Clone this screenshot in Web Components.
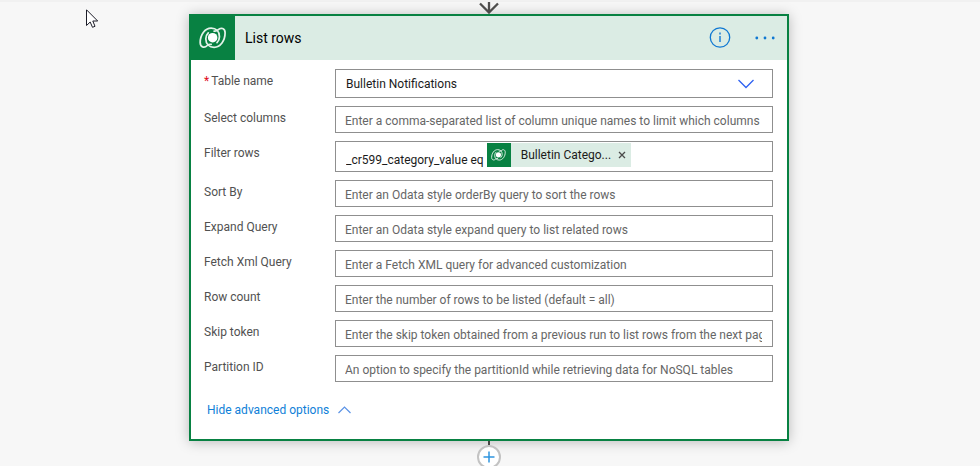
<!DOCTYPE html>
<html lang="en">
<head>
<meta charset="utf-8">
<title>List rows</title>
<style>
html { scrollbar-width: none; }
body { margin: 0; background: #f7f7f7; font-family: "Segoe UI", Roboto, "Noto Sans", sans-serif; font-size: 12px; color: #000; }
</style>
</head>
<body>
<flow-canvas>
  <flow-arrow></flow-arrow>
  <action-card heading="List rows">
    <choice-field label="Table name" value="Bulletin Notifications" required></choice-field>
    <text-field label="Select columns" hint="Enter a comma-separated list of column unique names to limit which columns are listed"></text-field>
    <expression-field label="Filter rows" value="_cr599_category_value eq"><token-chip>Bulletin Catego...</token-chip></expression-field>
    <text-field label="Sort By" hint="Enter an Odata style orderBy query to sort the rows"></text-field>
    <text-field label="Expand Query" hint="Enter an Odata style expand query to list related rows"></text-field>
    <text-field label="Fetch Xml Query" hint="Enter a Fetch XML query for advanced customization"></text-field>
    <text-field label="Row count" hint="Enter the number of rows to be listed (default = all)"></text-field>
    <text-field label="Skip token" hint="Enter the skip token obtained from a previous run to list rows from the next page"></text-field>
    <text-field label="Partition ID" hint="An option to specify the partitionId while retrieving data for NoSQL tables"></text-field>
    <advanced-toggle slot="footer">Hide advanced options</advanced-toggle>
  </action-card>
  <add-step></add-step>
  <mouse-pointer slot="overlay"></mouse-pointer>
</flow-canvas>
<script>
const define = (name, render) => customElements.define(name, class extends HTMLElement {
  constructor() {
    super();
    this.attachShadow({ mode: 'open' });
  }
  connectedCallback() {
    const t = document.createElement('template');
    t.innerHTML = render(this);
    this.shadowRoot.replaceChildren(t.content.cloneNode(true));
  }
});

const fieldStyles = `
  * { box-sizing: border-box; }
  :host { display: grid; grid-template-columns: 131px minmax(0, 1fr); align-items: start; }
  label { line-height: 24px; color: #515151; white-space: nowrap; }
  .req { color: #e00b1c; margin-right: 2px; }
  input, select { font: inherit; color: #1b1b1b; margin: 0; border-radius: 0; background: #fff; outline-color: #0078d4; }
`;

define('flow-canvas', () => `
  <style>
    :host { display: flex; flex-direction: column; align-items: center; position: relative; border-top: 2px solid #f1f1f1; padding: 0 10px 0 8px; }
  </style>
  <slot></slot><slot name="overlay"></slot>`);

define('flow-arrow', () => `
  <style>:host { display: block; height: 12px; } svg { display: block; }</style>
  <svg width="22" height="12" viewBox="0 0 22 12" fill="none" stroke="#51504f" stroke-width="2.3" aria-hidden="true"><path d="M11 0V11M2 1.5L11 10.5L20 1.5"/></svg>`);

define('dataverse-logo', () => `
  <style>:host { display: grid; place-items: center; background: #088142; } svg { width: 62%; }</style>
  <svg viewBox="0 0 28 22" fill="none" stroke="#e3f2e9" stroke-width="1.800" stroke-linejoin="round" stroke-linecap="round" aria-hidden="true">
    <path d="M12.500 17.800C10.500 17.500 9.500 18 8.500 19C5.500 22 1.200 20.800 1.200 16C1.200 8 6 1.200 12.500 1.200C17.500 1.200 21 4.500 21 10C21 12.500 20 14.500 18.500 16"/>
    <path d="M15.500 4.200C17.500 4.500 18.500 4 19.500 3C22.500 0 26.800 1.200 26.800 6C26.800 14 22 20.800 15.500 20.800C10.500 20.800 7 17.500 7 12C7 9.500 8 7.500 9.500 6"/>
    <circle cx="14" cy="11" r="4.900" fill="#fff" stroke="none"/>
  </svg>`);

define('action-card', el => `
  <style>
    * { box-sizing: border-box; }
    :host { display: block; box-sizing: border-box; width: 100%; max-width: 600px; border: 2px solid #088142; background: #fff; box-shadow: 0 1px 12px rgba(0,0,0,.25); }
    header { display: flex; align-items: center; height: 44px; background: #dbece4; padding-right: 8px; }
    dataverse-logo { width: 44px; height: 44px; }
    h1 { flex: 1; margin: 0; padding-left: 10px; font-size: 14px; font-weight: 400; }
    button { border: 0; padding: 0; background: none; display: grid; place-items: center; width: 28px; height: 28px; }
    .actions { display: flex; gap: 17px; }
    svg { display: block; }
    form { display: grid; gap: 8px; padding: 9px 14px 0 13px; }
    footer { padding: 17px 16px 18px; }
  </style>
  <header>
    <dataverse-logo></dataverse-logo>
    <h1>${el.getAttribute('heading')}</h1>
    <div class="actions">
      <button aria-label="Information"><svg width="22" height="22" viewBox="0 0 22 22" fill="none" stroke="#0f78d2"><circle cx="11" cy="10.500" r="9.700" stroke-width="1.300"/><path d="M11 9V15M11 5.500V7.500" stroke-width="1.800" stroke="#3c91d8"/></svg></button>
      <button aria-label="More commands"><svg width="22" height="22" viewBox="0 0 22 22" fill="#0f78d2"><circle cx="2.800" cy="11" r="1.400"/><circle cx="11" cy="11" r="1.400"/><circle cx="19.200" cy="11" r="1.400"/></svg></button>
    </div>
  </header>
  <form><slot></slot></form>
  <footer><slot name="footer"></slot></footer>`);

define('text-field', el => `
  <style>${fieldStyles}
    input { width: 100%; height: 27px; border: 1px solid #8f8f8f; padding: 3px 10px 0 9px; }
    input::placeholder { color: #666; opacity: 1; }
  </style>
  <label for="f">${el.getAttribute('label')}</label>
  <input id="f" type="text" placeholder="${el.getAttribute('hint')}">`);

define('choice-field', el => `
  <style>${fieldStyles}
    .box { display: grid; align-items: center; }
    select, svg { grid-area: 1 / 1; }
    select { appearance: none; width: 100%; height: 29px; border: 1px solid #8f8f8f; padding: 0 40px 0 10px; }
    svg { justify-self: end; margin-right: 19px; pointer-events: none; }
  </style>
  <label for="f">${el.hasAttribute('required') ? '<span class="req">*</span>' : ''}${el.getAttribute('label')}</label>
  <div class="box">
    <select id="f"><option>${el.getAttribute('value')}</option></select>
    <svg width="16" height="10" viewBox="0 0 16 10" fill="none" stroke="#2f62f2" stroke-width="1.300" aria-hidden="true"><path d="M.5 1L8 8.500L15.500 1"/></svg>
  </div>`);

define('expression-field', el => `
  <style>${fieldStyles}
    .box { display: flex; align-items: flex-start; gap: 3px; height: 31px; border: 1px solid #8f8f8f; padding: 1px 10px 0; overflow: hidden; }
    input { field-sizing: content; border: 0; padding: 0; height: 24px; margin-top: 5px; }
  </style>
  <label for="f">${el.getAttribute('label')}</label>
  <div class="box"><input id="f" type="text" value="${el.getAttribute('value')}"><slot></slot></div>`);

define('token-chip', () => `
  <style>
    :host { display: flex; align-items: center; height: 24px; background: #dbece4; color: #1b1b1b; white-space: nowrap; }
    dataverse-logo { width: 24px; height: 24px; margin-right: 10px; }
    button { border: 0; background: none; padding: 0 5px; margin-left: 2px; height: 24px; }
    svg { display: block; }
  </style>
  <dataverse-logo></dataverse-logo><slot></slot>
  <button type="button" aria-label="Remove"><svg width="8" height="8" viewBox="0 0 8 8" stroke="#4a4a4a" stroke-width="1.300"><path d="M1 1L7 7M7 1L1 7"/></svg></button>`);

define('advanced-toggle', () => `
  <style>
    :host { display: flex; }
    a { display: flex; align-items: center; gap: 9px; line-height: 22px; color: #0f7fd8; text-decoration: none; }
  </style>
  <a href="#"><slot></slot><svg width="13" height="8" viewBox="0 0 13 8" fill="none" stroke="#5b93e6" stroke-width="1.200" aria-hidden="true"><path d="M.5 7L6.500 1L12.500 7"/></svg></a>`);

define('add-step', () => `
  <style>
    :host { display: flex; flex-direction: column; align-items: center; }
    .line { width: 2px; height: 4px; background: #484644; }
    button { box-sizing: border-box; width: 24px; height: 24px; border: 2px solid #c3c3c3; border-radius: 50%; background: #fff; padding: 0; display: grid; place-items: center; }
    svg { display: block; }
  </style>
  <div class="line"></div>
  <button aria-label="Insert a new step"><svg width="12" height="12" viewBox="0 0 12 12" stroke="#2f95e0" stroke-width="1.500"><path d="M6 .5V11.500M.5 6H11.500"/></svg></button>`);

define('mouse-pointer', () => `
  <style>:host { position: absolute; left: 86px; top: 7px; } svg { display: block; }</style>
  <svg width="13" height="20" viewBox="0 0 13 20" fill="#fff" stroke="#1c1c28" aria-hidden="true"><path d="M.5 .8V16.500L4.200 13L6.500 18.300L9 17.300L6.800 12H11.700Z"/></svg>`);
</script>
</body>
</html>
